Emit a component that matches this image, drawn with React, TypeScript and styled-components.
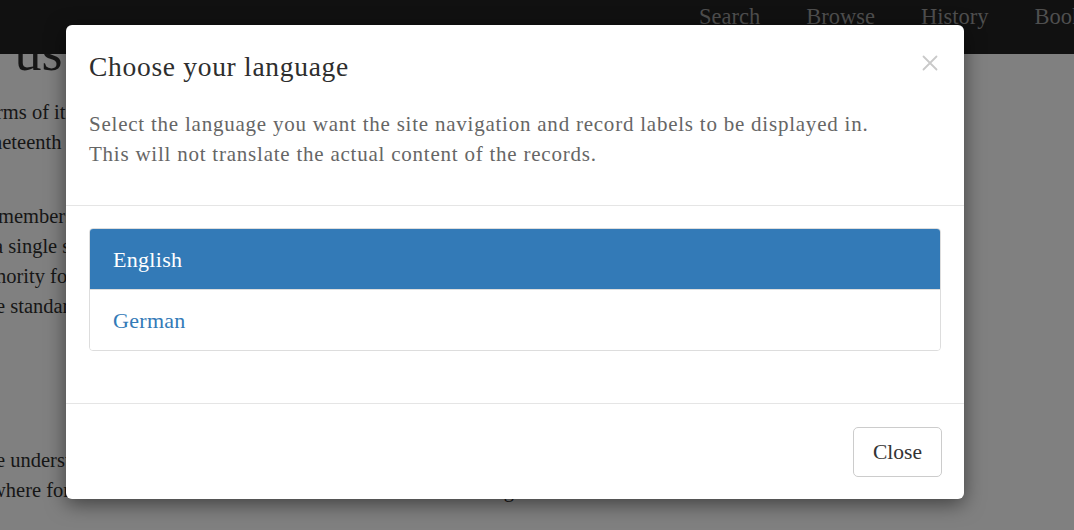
import React from "react";
import styled, { createGlobalStyle } from "styled-components";

const Global = createGlobalStyle`
  html, body { margin: 0; padding: 0; }
  body {
    width: 1074px;
    height: 530px;
    overflow: hidden;
    background: #808080;
    font-family: "Liberation Serif", "Times New Roman", serif;
  }
`;

const Page = styled.div`
  position: relative;
  width: 1074px;
  height: 530px;
  overflow: hidden;
  background: #808080;
`;

const NavBar = styled.nav`
  position: relative;
  z-index: 1;
  height: 54px;
  background: #111111;
  display: flex;
  align-items: flex-start;
  padding-left: 676px;
  overflow: hidden;
  white-space: nowrap;
`;

const NavLink = styled.span`
  padding: 3px 23px 0;
  font-size: 22.5px;
  line-height: 28px;
  color: #4f4f4f;
`;

const Content = styled.main`
  color: #161616;
  font-size: 20.5px;
  line-height: 30px;
  white-space: nowrap;
`;

const PageTitle = styled.h1`
  margin: -29px 0 0 -17px;
  font-size: 54px;
  line-height: 54px;
  font-weight: normal;
`;

const Para = styled.div<{ $gap: number }>`
  margin-top: ${(p) => p.$gap}px;
`;

const Line = styled.div<{ $shift: number }>`
  margin-left: ${(p) => p.$shift}px;
`;

const Modal = styled.div`
  position: absolute;
  z-index: 2;
  left: 66px;
  top: 25px;
  width: 898px;
  height: 474px;
  background: #fff;
  border-radius: 6px;
  box-shadow: 0 5px 20px rgba(0, 0, 0, 0.5);
  display: flex;
  flex-direction: column;
`;

const Header = styled.header`
  position: relative;
  padding: 24px 23px 36px;
  border-bottom: 1px solid #e5e5e5;
`;

const Title = styled.h4`
  margin: 0;
  font-size: 27.5px;
  letter-spacing: 0.7px;
  line-height: 36px;
  font-weight: normal;
  color: #2e2e2e;
`;

const Description = styled.p`
  margin: 24px 0 0;
  font-size: 21px;
  letter-spacing: 0.77px;
  line-height: 30px;
  color: #666;
`;

const CloseX = styled.button`
  position: absolute;
  right: 25px;
  top: 29px;
  width: 18px;
  height: 18px;
  padding: 0;
  border: 0;
  background: transparent;
  display: flex;
  align-items: center;
  justify-content: center;
`;

const Body = styled.section`
  padding: 22px 23px 52px;
  border-bottom: 1px solid #e5e5e5;
`;

const List = styled.div`
  border: 1px solid #dddddd;
  border-radius: 4px;
  overflow: hidden;
`;

const Item = styled.div<{ $active?: boolean }>`
  padding: 16px 23px 14px;
  font-size: 22px;
  letter-spacing: 0.3px;
  line-height: 30px;
  background: ${(p) => (p.$active ? "#337ab7" : "#fff")};
  color: ${(p) => (p.$active ? "#fff" : "#337ab7")};
  & + & {
    border-top: 1px solid #dddddd;
  }
`;

const Footer = styled.footer`
  flex: 1;
  display: flex;
  justify-content: flex-end;
  align-items: flex-start;
  padding: 23px 22px 0;
`;

const Button = styled.button`
  width: 89px;
  height: 50px;
  border: 1px solid #cccccc;
  border-radius: 5px;
  background: #fff;
  font-family: "Liberation Serif", "Times New Roman", serif;
  font-size: 21.5px;
  color: #333;
  padding: 0;
`;

export default function App() {
  return (
    <>
      <Global />
      <Page>
        <NavBar>
          <NavLink>Search</NavLink>
          <NavLink>Browse</NavLink>
          <NavLink>History</NavLink>
          <NavLink>Bookmarks</NavLink>
        </NavBar>
        <Content>
          <PageTitle>r us</PageTitle>
          <Para $gap={18}>
            <Line $shift={-4}>rms of its holdings</Line>
            <Line $shift={-8}>neteenth century</Line>
          </Para>
          <Para $gap={44}>
            <Line $shift={-2}>members</Line>
            <Line $shift={-6}>a single source</Line>
            <Line $shift={-4}>hority for the</Line>
            <Line $shift={-4}>e standards</Line>
          </Para>
          <Para $gap={124}>
            <Line $shift={-4}>e understand</Line>
            <Line $shift={-9}>where for the readers and scholars of the whole world to see a great</Line>
          </Para>
        </Content>
        <Modal>
          <Header>
            <Title>Choose your language</Title>
            <Description>
              Select the language you want the site navigation and record labels to be displayed in.
              <br />
              This will not translate the actual content of the records.
            </Description>
            <CloseX aria-label="Close">
              <svg width="16" height="16" viewBox="0 0 16 16">
                <path d="M1.5 1.5 L14.5 14.5 M14.5 1.5 L1.5 14.5" stroke="#c9c9c9" strokeWidth="1.8" strokeLinecap="round" />
              </svg>
            </CloseX>
          </Header>
          <Body>
            <List>
              <Item $active>English</Item>
              <Item>German</Item>
            </List>
          </Body>
          <Footer>
            <Button>Close</Button>
          </Footer>
        </Modal>
      </Page>
    </>
  );
}
